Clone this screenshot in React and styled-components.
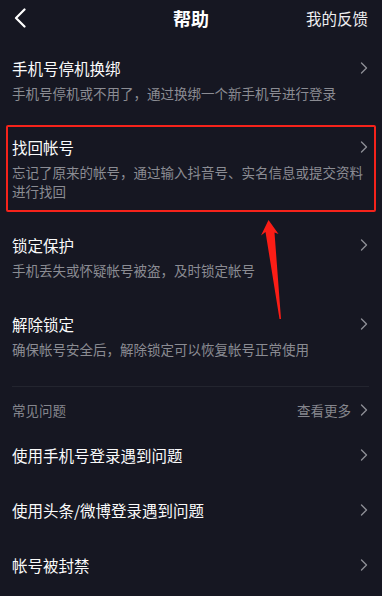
import React from 'react'
import styled, { createGlobalStyle } from 'styled-components'

const accountItems = [
  { title: '手机号停机换绑', desc: ['手机号停机或不用了，通过换绑一个新手机号进行登录'] },
  { title: '找回帐号', desc: ['忘记了原来的帐号，通过输入抖音号、实名信息或提交资料', '进行找回'], marked: true },
  { title: '锁定保护', desc: ['手机丢失或怀疑帐号被盗，及时锁定帐号'] },
  { title: '解除锁定', desc: ['确保帐号安全后，解除锁定可以恢复帐号正常使用'] },
]

const faqItems = ['使用手机号登录遇到问题', '使用头条/微博登录遇到问题', '帐号被封禁']

function Chevron() {
  return (
    <ChevronIcon width="8" height="12" viewBox="0 0 8 12">
      <polyline points="1.5,1 6.5,6 1.5,11" fill="none" stroke="currentColor" strokeWidth="1.4" strokeLinecap="round" strokeLinejoin="round" />
    </ChevronIcon>
  )
}

function App() {
  return (
    <>
      <GlobalStyle />
      <Page>
        <Header>
          <BackButton>
            <svg width="12" height="20" viewBox="0 0 12 20">
              <polyline points="10.5,1.5 2,10 10.5,18.5" fill="none" stroke="#fff" strokeWidth="2.2" strokeLinecap="round" strokeLinejoin="round" />
            </svg>
          </BackButton>
          <Title>帮助</Title>
          <HeaderLink>我的反馈</HeaderLink>
        </Header>

        <List>
          {accountItems.map((item) => (
            <Item key={item.title}>
              {item.marked && <Highlight />}
              <ItemHead>
                <ItemTitle>{item.title}</ItemTitle>
                <Chevron />
              </ItemHead>
              <ItemDesc>
                {item.desc.map((line) => (
                  <span key={line}>{line}</span>
                ))}
              </ItemDesc>
            </Item>
          ))}
        </List>

        <Divider />

        <SectionHead>
          <SectionLabel>常见问题</SectionLabel>
          <MoreLink>
            查看更多
            <Chevron />
          </MoreLink>
        </SectionHead>

        {faqItems.map((q) => (
          <FaqRow key={q}>
            <ItemTitle>{q}</ItemTitle>
            <Chevron />
          </FaqRow>
        ))}

        <Arrow width="382" height="596" viewBox="0 0 382 596">
          <polygon
            points="268.5,220 278.5,234 274.5,232.5 281,319 279.5,319 265.5,232 261,235.5"
            fill="#fb1d16"
          />
        </Arrow>
      </Page>
    </>
  )
}

const GlobalStyle = createGlobalStyle`
  html, body {
    margin: 0;
    padding: 0;
    background: #161722;
  }
  body {
    font-family: "Noto Sans CJK SC", "Noto Sans", sans-serif;
    color: #fff;
  }
`

const Page = styled.div`
  position: relative;
  width: 382px;
  height: 596px;
  overflow: hidden;
  background: #161722;
`

const Header = styled.div`
  height: 35px;
  display: flex;
  align-items: center;
  justify-content: space-between;
  padding: 0 14px 0 14px;
  position: relative;
`

const BackButton = styled.div`
  display: flex;
  align-items: center;
  width: 40px;
`

const Title = styled.div`
  position: absolute;
  left: 0;
  right: 0;
  text-align: center;
  font-size: 18px;
  font-weight: 700;
  pointer-events: none;
`

const HeaderLink = styled.div`
  font-size: 15.5px;
  color: #eeeef0;
`

const List = styled.div`
  padding-top: 5.5px;
`

const Item = styled.div`
  position: relative;
  padding: 16.5px 12px 17px 12px;
`

const Highlight = styled.div`
  position: absolute;
  inset: 5.5px 6px 5.5px 6px;
  border: 2.5px solid #f5231b;
  border-radius: 2px;
  pointer-events: none;
`

const ItemHead = styled.div`
  display: flex;
  align-items: center;
  justify-content: space-between;
  height: 22px;
`

const ItemTitle = styled.div`
  font-size: 15.5px;
  line-height: 22px;
  color: #fafafa;
`

const ItemDesc = styled.div`
  display: flex;
  flex-direction: column;
  margin-top: 4.5px;
  font-size: 13.5px;
  line-height: 19px;
  color: #8b8c93;
`

const ChevronIcon = styled.svg`
  color: #8d8e95;
  margin-right: 2px;
  flex-shrink: 0;
`

const Divider = styled.div`
  height: 1px;
  margin: 10px 13px 0 12px;
  background: #23252f;
`

const SectionHead = styled.div`
  display: flex;
  align-items: center;
  justify-content: space-between;
  padding: 14px 12px 8.5px 12px;
  height: 18px;
`

const SectionLabel = styled.div`
  font-size: 13.5px;
  color: #85868d;
`

const MoreLink = styled.div`
  display: flex;
  align-items: center;
  gap: 9px;
  font-size: 13.5px;
  color: #85868d;
`

const FaqRow = styled.div`
  height: 55px;
  display: flex;
  align-items: center;
  justify-content: space-between;
  padding: 0 12px;
`

const Arrow = styled.svg`
  position: absolute;
  left: 0;
  top: 0;
  pointer-events: none;
`

export default App
